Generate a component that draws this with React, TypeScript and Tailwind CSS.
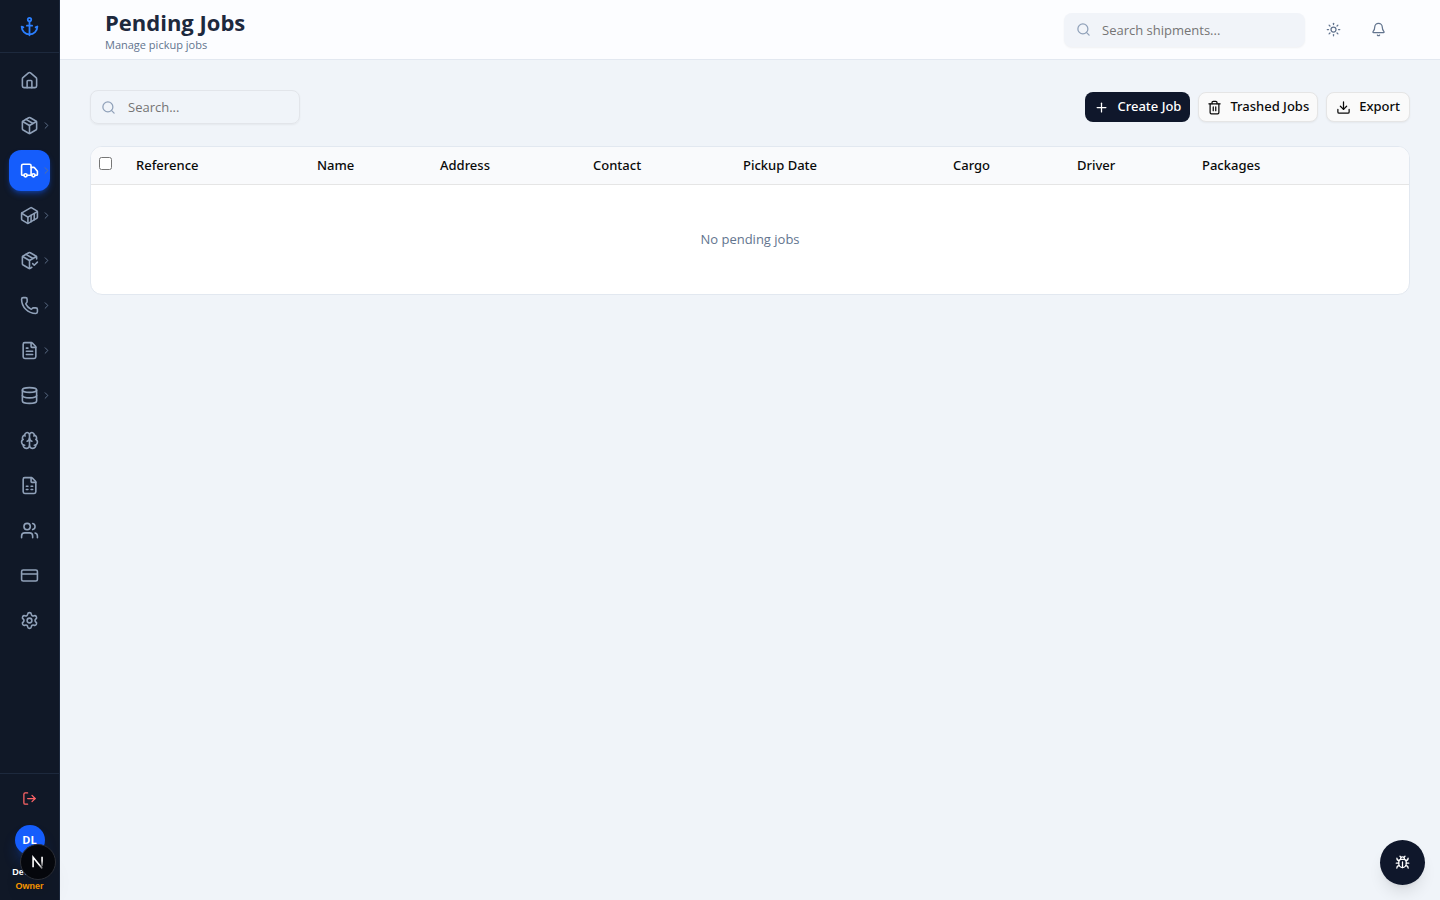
import {
  Anchor,
  Bell,
  Brain,
  Bug,
  ChevronRight,
  Container,
  CreditCard,
  Database,
  Download,
  FileSpreadsheet,
  FileText,
  House,
  LogOut,
  Package,
  PackageCheck,
  Phone,
  Plus,
  Search,
  Settings,
  Sun,
  Trash2,
  Truck,
  Users,
  type LucideIcon,
} from 'lucide-react';
import { clsx } from 'clsx';

type NavItem = {
  label: string;
  icon: LucideIcon;
  expandable?: boolean;
  active?: boolean;
};

const navItems: NavItem[] = [
  { label: 'Dashboard', icon: House },
  { label: 'Shipments', icon: Package, expandable: true },
  { label: 'Pickup jobs', icon: Truck, expandable: true, active: true },
  { label: 'Containers', icon: Container, expandable: true },
  { label: 'Deliveries', icon: PackageCheck, expandable: true },
  { label: 'Calls', icon: Phone, expandable: true },
  { label: 'Documents', icon: FileText, expandable: true },
  { label: 'Data', icon: Database, expandable: true },
  { label: 'Assistant', icon: Brain },
  { label: 'Reports', icon: FileSpreadsheet },
  { label: 'Users', icon: Users },
  { label: 'Billing', icon: CreditCard },
  { label: 'Settings', icon: Settings },
];

const columns = [
  { label: 'Reference', width: 'w-[181px]' },
  { label: 'Name', width: 'w-[123px]' },
  { label: 'Address', width: 'w-[153px]' },
  { label: 'Contact', width: 'w-[150px]' },
  { label: 'Pickup Date', width: 'w-[210px]' },
  { label: 'Cargo', width: 'w-[124px]' },
  { label: 'Driver', width: 'w-[125px]' },
  { label: 'Packages', width: 'w-[215px]' },
];

function NavLink({ item }: Readonly<{ item: NavItem }>) {
  const Icon = item.icon;

  return (
    <a
      href="#"
      aria-label={item.label}
      className={clsx(
        'relative flex h-[41px] w-[41px] items-center justify-center rounded-xl',
        item.active
          ? 'bg-[#155dfc] text-white shadow-md shadow-blue-600/40'
          : 'text-[#90a1b9] hover:bg-slate-800',
      )}
    >
      <Icon size={19} strokeWidth={2} />
      {item.expandable && (
        <ChevronRight
          size={11}
          className="absolute -right-0.5 text-slate-500"
        />
      )}
    </a>
  );
}

function Sidebar() {
  return (
    <aside className="sticky top-0 flex h-screen w-[60px] shrink-0 flex-col border-r border-[#1d293d] bg-[#101827]">
      <div className="flex h-[53px] shrink-0 items-center justify-center border-b border-[#1d293d] text-[#2b7fff]">
        <Anchor size={21} />
      </div>
      <nav className="flex min-h-0 flex-1 flex-col items-center gap-1 pt-[7px]">
        {navItems.map((item) => (
          <NavLink key={item.label} item={item} />
        ))}
      </nav>
      <div className="flex shrink-0 flex-col items-center border-t border-[#1d293d] pt-2 pb-[7px]">
        <button
          type="button"
          aria-label="Log out"
          className="flex h-8 w-8 items-center justify-center text-[#ff6467]"
        >
          <LogOut size={15} />
        </button>
        <div className="mt-[11px] flex h-[30px] w-[30px] items-center justify-center rounded-full bg-[#155dfc] text-[11px] font-bold text-white shadow-lg shadow-blue-600/30">
          DL
        </div>
        <div className="mt-2.5 flex flex-col items-center font-['Liberation_Sans',sans-serif] text-[9px] leading-[14px] font-bold">
          <span className="text-white">Dev Lee</span>
          <span className="text-[#fe9a00]">Owner</span>
        </div>
      </div>
    </aside>
  );
}

function DevToolsBadge() {
  return (
    <button
      type="button"
      aria-label="Open Next.js dev tools"
      className="fixed bottom-5 left-5 flex h-9 w-9 items-center justify-center rounded-full border border-[#2c2f36] bg-[#05070c] shadow-xl"
    >
      <svg width="36" height="36" viewBox="0 0 36 36" fill="none">
        <defs>
          <linearGradient id="stem" x1="0" y1="12" x2="0" y2="24" gradientUnits="userSpaceOnUse">
            <stop offset="0.4" stopColor="white" />
            <stop offset="1" stopColor="white" stopOpacity="0.1" />
          </linearGradient>
          <linearGradient id="diagonal" x1="18" y1="18" x2="24" y2="26" gradientUnits="userSpaceOnUse">
            <stop offset="0.3" stopColor="white" />
            <stop offset="1" stopColor="white" stopOpacity="0.2" />
          </linearGradient>
        </defs>
        <path d="M12.8 23.5V13L22.5 25" stroke="url(#diagonal)" strokeWidth="1.7" />
        <path d="M22.3 12.5V22.5" stroke="url(#stem)" strokeWidth="1.7" />
      </svg>
    </button>
  );
}

function Header() {
  return (
    <header className="flex h-[60px] items-center justify-between border-b border-slate-200 bg-[#fcfdff] px-[45px]">
      <div className="pt-0.5">
        <h1 className="text-[22px] leading-7 font-bold text-slate-800">
          Pending Jobs
        </h1>
        <p className="text-[11px] leading-[17px] text-slate-500">
          Manage pickup jobs
        </p>
      </div>
      <div className="flex items-center gap-3">
        <label className="flex h-[34px] w-[241px] items-center gap-[11px] rounded-lg bg-[#f1f4f9] px-3 shadow-xs">
          <Search size={15} className="shrink-0 text-[#90a1b9]" />
          <input
            type="search"
            aria-label="Search shipments"
            placeholder="Search shipments..."
            className="w-full min-w-0 bg-transparent pt-0.5 text-[13px] outline-none placeholder:text-[#757575]"
          />
        </label>
        <button
          type="button"
          aria-label="Toggle theme"
          className="flex h-[33px] w-[33px] items-center justify-center text-slate-500"
        >
          <Sun size={15} />
        </button>
        <button
          type="button"
          aria-label="Notifications"
          className="flex h-[33px] w-[33px] items-center justify-center text-slate-500"
        >
          <Bell size={15} />
        </button>
      </div>
    </header>
  );
}

function Toolbar() {
  return (
    <div className="flex items-center justify-between">
      <label className="flex h-[34px] w-[210px] items-center gap-3 rounded-lg border border-[#e2e5ea] px-2.5 shadow-xs">
        <Search size={15} className="shrink-0 text-[#90a1b9]" />
        <input
          type="search"
          aria-label="Search jobs"
          placeholder="Search..."
          className="w-full min-w-0 bg-transparent pt-0.5 text-[13px] outline-none placeholder:text-[#757575]"
        />
      </label>
      <div className="flex items-center gap-2 font-['Noto_Sans',sans-serif] text-[13px] font-medium">
        <button
          type="button"
          className="flex h-[30px] items-center gap-2 rounded-lg bg-[#0f172b] px-[9px] text-white"
        >
          <Plus size={15} />
          Create Job
        </button>
        <button
          type="button"
          className="flex h-[30px] items-center gap-2 rounded-lg border border-[#e5e5e5] bg-[#fafafa] px-2 text-neutral-950 shadow-xs"
        >
          <Trash2 size={15} />
          Trashed Jobs
        </button>
        <button
          type="button"
          className="flex h-[30px] items-center gap-2 rounded-lg border border-[#e5e5e5] bg-[#fafafa] px-[9px] text-neutral-950 shadow-xs"
        >
          <Download size={15} />
          Export
        </button>
      </div>
    </div>
  );
}

function JobsTable() {
  return (
    <div className="overflow-hidden rounded-xl border border-slate-200 bg-white">
      <table className="w-full table-fixed text-left text-[13px]">
        <thead className="bg-[#f9fafc] font-['Noto_Sans',sans-serif]">
          <tr className="h-[37px] border-b border-[#e5e5e5]">
            <th className="w-[37px] px-2 align-top">
              <input
                type="checkbox"
                aria-label="Select all jobs"
                className="mt-2.5 block h-[13px] w-[13px]"
              />
            </th>
            {columns.map((column) => (
              <th
                key={column.label}
                className={clsx('px-2 font-medium text-neutral-950', column.width)}
              >
                {column.label}
              </th>
            ))}
          </tr>
        </thead>
        <tbody>
          <tr>
            <td
              colSpan={columns.length + 1}
              className="h-[110px] text-center text-slate-500"
            >
              No pending jobs
            </td>
          </tr>
        </tbody>
      </table>
    </div>
  );
}

export default function App() {
  return (
    <div className="flex min-h-screen bg-[#f0f4f9] font-['Open_Sans','Noto_Sans',sans-serif]">
      <Sidebar />
      <div className="min-w-0 flex-1">
        <Header />
        <main className="flex flex-col gap-[22px] p-[30px]">
          <Toolbar />
          <JobsTable />
        </main>
      </div>
      <DevToolsBadge />
      <button
        type="button"
        aria-label="Report a bug"
        className="fixed right-[15px] bottom-[15px] flex h-[45px] w-[45px] items-center justify-center rounded-full bg-[#0f172b] text-white shadow-lg"
      >
        <Bug size={15} />
      </button>
    </div>
  );
}
